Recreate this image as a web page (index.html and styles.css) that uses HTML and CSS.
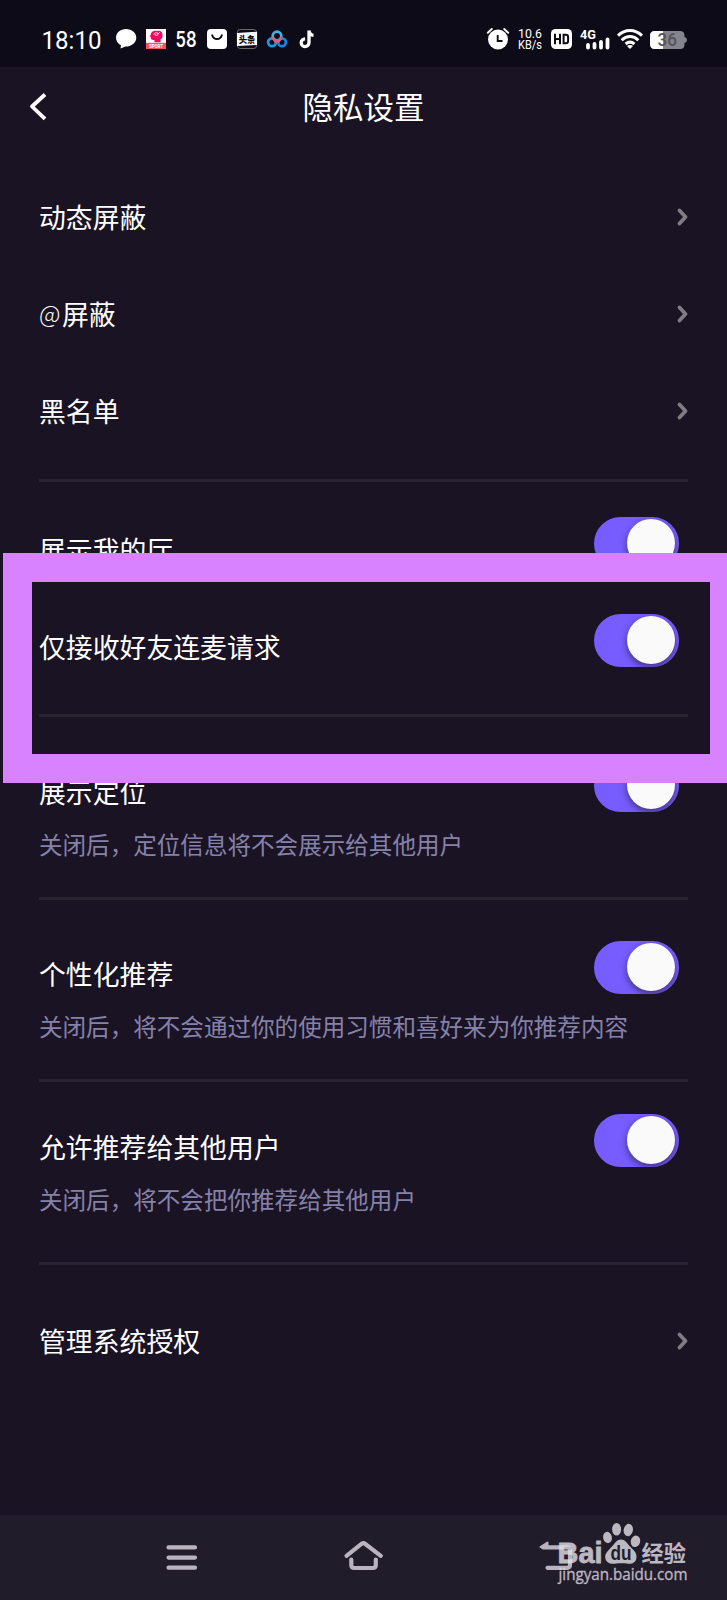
FILE: index.html
```html
<!DOCTYPE html>
<html lang="zh-CN">
<head>
<meta charset="utf-8">
<title>隐私设置</title>
<link rel="stylesheet" href="styles.css">
</head>
<body>
<div class="screen">
  <div class="status">
    <svg class="clock" width="64" height="28" viewBox="40 26 64 28"><text x="41.5" y="49.5" textLength="60" lengthAdjust="spacingAndGlyphs">18:10</text></svg>
    <div class="apps">
      <svg width="20" height="20" viewBox="0 0 20 20"><path d="M10 0C4.300 0 0 3.700 0 8.800c0 3.200 2 6 5 7.500L4.500 19.500 9.500 17.600C15.500 17.600 20.300 13.800 20.300 8.800 20.300 3.700 15.700 0 10 0Z" fill="#fff"/></svg>
      <svg width="20" height="20" viewBox="0 0 20 20"><path fill="#fff" d="M0 0h20v20H0z"/><path fill="#ed5556" d="M0 13.800h20V20H0z"/><path fill="#ee0a61" d="M5 4.500C6 1.500 9 1.300 11 2c3-1 6 1 5.500 4.500.3 3-1.500 3.500-2 4v2.800H8.500V11C5.500 11.300 4.500 10 5 8.500L4 7.500Z"/><path d="M8 5.500c0-2 4-2.500 4-.5S8.500 6.500 9 5M12 5l2-2" fill="none" stroke="#fff" stroke-width=".9"/><text class="tiny" x="3" y="18.700" textLength="14">SPORT</text></svg>
      <svg width="20" height="20" viewBox="0 0 20 20"><text class="fifty" x="-.5" y="18" textLength="21" lengthAdjust="spacingAndGlyphs">58</text></svg>
      <svg width="20" height="20" viewBox="0 0 20 20"><rect width="20" height="20" rx="4" fill="#fff"/><path d="M5.200 6.200c1.500 5 8.100 5 9.600 0" fill="none" stroke="#0d0b17" stroke-width="1.900" stroke-linecap="round"/></svg>
      <svg width="20" height="20" viewBox="0 0 20 20"><rect x=".3" y=".5" width="19.400" height="19" rx="3" fill="#0d0b17" stroke="#aaa" stroke-width=".6"/><path fill="#fff" d="M0 4 20 2.800V16L0 17Z"/><text class="news" x="1.700" y="13.600" textLength="16.600" lengthAdjust="spacingAndGlyphs">头条</text></svg>
      <svg width="20" height="20" viewBox="0 0 20 20" fill="none" stroke-width="2.700"><circle cx="10" cy="7" r="4.300" stroke="#3db1e8"/><circle cx="5" cy="13.300" r="3.900" stroke="#129fe4"/><circle cx="15" cy="13.300" r="3.900" stroke="#1686e2"/><path d="M5.700 7.500a4.300 4.300 0 0 0 8.600 0M7 10.500l2.300 3M13 10.500l-2.300 3" stroke="#e95a70"/></svg>
      <svg width="20" height="20" viewBox="0 0 20 20"><path d="M12 1.500v12.400a3.900 3.900 0 1 1-3.900-4.100M12 1.500c.4 3 1.800 4.700 4.500 4.900" fill="none" stroke="#fff" stroke-width="3.300"/></svg>
    </div>
    <div class="signals">
      <svg width="22" height="22" viewBox="0 0 22 22"><circle cx="11" cy="11.500" r="10" fill="#fff"/><path d="M.8 4.800 4.800 1M21.200 4.800 17.200 1" stroke="#fff" stroke-width="1.900" stroke-linecap="round"/><path d="M10.700 7v6h4.800" fill="none" stroke="#0d0b17" stroke-width="1.900"/></svg>
      <svg width="24" height="22" viewBox="0 0 24 22"><text class="rate" x="0" y="9.800" textLength="24" lengthAdjust="spacingAndGlyphs">10.6</text><text class="rate unit" x="0" y="20.700" textLength="24" lengthAdjust="spacingAndGlyphs">KB/s</text></svg>
      <svg width="21" height="22" viewBox="0 0 21 22"><rect y="1" width="21" height="20" rx="4.500" fill="#fff"/><path d="M4 5.800v10.400M9 5.800v10.400M4 11h5M12.600 6.800v8.400h2.200q2.300 0 2.300-2.300V9.100q0-2.300-2.300-2.300Z" fill="none" stroke="#0d0b17" stroke-width="2"/></svg>
      <svg width="30" height="22" viewBox="0 0 30 22"><text class="gen" x="0" y="10.800" textLength="16" lengthAdjust="spacingAndGlyphs">4G</text><path d="M8 17v2.500M14.500 16v3.500M21 14v5.500M27.500 11.500v8" stroke="#fff" stroke-width="3.800" stroke-linecap="round"/></svg>
      <svg width="26" height="22" viewBox="0 0 26 22"><g fill="none" stroke="#fff" stroke-width="3"><path d="M1 7.600c7-6.800 17-6.800 24 0M4.700 12.200c5-4.900 11.600-4.900 16.600 0M8.600 16c3-2.600 5.800-2.600 8.800 0"/></g><path d="M10 18c2-1.300 4-1.300 6 0l-3 3Z" fill="#fff"/></svg>
      <svg width="37" height="22" viewBox="0 0 37 22"><path d="M5 3h25q4.500 0 4.500 4.500v1.500q2.500.5 2.500 3t-2.500 3v1.500q0 4.500-4.500 4.500H5q-5 0-5-5V8q0-5 5-5Z" fill="#85838b"/><path d="M5 3h8v18H5q-5 0-5-5V8q0-5 5-5Z" fill="#fff"/><text class="level" x="7.500" y="18" textLength="19.500" lengthAdjust="spacingAndGlyphs">36</text></svg>
    </div>
  </div>

  <header class="header">
    <svg class="back" width="18" height="30" viewBox="0 0 18 30"><path d="M15 2.500 2 14.500l13 12.400" fill="none" stroke="#fff" stroke-width="3.800" stroke-linejoin="round"/></svg>
    <h1>隐私设置</h1>
  </header>

  <main>
    <section class="links">
      <div class="row"><span>动态屏蔽</span><svg class="chev" viewBox="0 0 11 18"><path d="M2.500 2.500 8.500 9l-6 6.500"/></svg></div>
      <div class="row"><span><span class="at">@</span>屏蔽</span><svg class="chev" viewBox="0 0 11 18"><path d="M2.500 2.500 8.500 9l-6 6.500"/></svg></div>
      <div class="row"><span>黑名单</span><svg class="chev" viewBox="0 0 11 18"><path d="M2.500 2.500 8.500 9l-6 6.500"/></svg></div>
    </section>
    <section class="friends">
      <div class="row option"><span>展示我的厅</span><i class="toggle"></i></div>
      <div class="row option"><span>仅接收好友连麦请求</span><i class="toggle"></i></div>
      <div class="highlight"></div>
    </section>
    <section class="location">
      <div class="row option"><span>展示定位</span><i class="toggle"></i></div>
      <p>关闭后，定位信息将不会展示给其他用户</p>
    </section>
    <section class="personal">
      <div class="row option"><span>个性化推荐</span><i class="toggle"></i></div>
      <p>关闭后，将不会通过你的使用习惯和喜好来为你推荐内容</p>
    </section>
    <section class="suggest">
      <div class="row option"><span>允许推荐给其他用户</span><i class="toggle"></i></div>
      <p>关闭后，将不会把你推荐给其他用户</p>
    </section>
    <section class="system">
      <div class="row"><span>管理系统授权</span><svg class="chev" viewBox="0 0 11 18"><path d="M2.500 2.500 8.500 9l-6 6.500"/></svg></div>
    </section>
  </main>

  <nav class="nav">
    <svg width="40" height="40" viewBox="162 1537 40 40"><path d="M168.500 1547.400h26.500M168.500 1557.600h26.500M168.500 1567.700h26.500"/></svg>
    <svg width="40" height="40" viewBox="343 1537 40 40"><path d="M346.500 1555.800 361.800 1543.700q1.600-1.200 3.200 0L380.800 1555.800M351.300 1559.500v5.500q0 3 3 3h18.500q3 0 3-3v-5.500"/></svg>
    <svg width="40" height="40" viewBox="535 1537 40 40"><path d="M543 1547.300h24q3 0 3 3v14.500q0 3-3 3h-19.500"/><path d="M540.500 1547 547.500 1542.500v5Z" fill="#b8b3bf" stroke-width="2"/></svg>
    <div class="watermark">
      <svg width="140" height="66" viewBox="552 1518 140 66">
        <text class="bai" x="557.500" y="1562.500" textLength="45" lengthAdjust="spacingAndGlyphs">Bai</text>
        <ellipse cx="607.500" cy="1537.500" rx="4.400" ry="5.700" transform="rotate(-12 607.500 1537.500)"/><ellipse cx="616.600" cy="1529.300" rx="4.500" ry="6.300"/><ellipse cx="628.300" cy="1530" rx="4.600" ry="6.200" transform="rotate(12 628.300 1530)"/><ellipse cx="635.500" cy="1541.300" rx="4.700" ry="5.800" transform="rotate(15 635.500 1541.300)"/>
        <path d="M621 1539.500c4 0 6 3.500 9 7 4 4 7 6.500 6.500 11-.5 5-4 6.500-8 6.200-5-.5-9-.5-14 0-5 .3-9-1.500-9.300-6.500-.2-4 3.300-7 6.800-10.700 3-3.500 5-7 9-7Z"/>
        <text class="du" x="610.500" y="1560" textLength="21" lengthAdjust="spacingAndGlyphs">du</text>
        <text class="jing" x="641.500" y="1561" textLength="44.500" lengthAdjust="spacingAndGlyphs">经验</text>
        <text class="url" x="558.500" y="1580" textLength="129" lengthAdjust="spacingAndGlyphs">jingyan.baidu.com</text>
      </svg>
    </div>
  </nav>
</div>
</body>
</html>
```
FILE: styles.css
```css
* { box-sizing: border-box; }

body {
  margin: 0;
  background: #1a1323;
  color: #fff;
  font-family: "Noto Sans CJK SC", sans-serif;
}

.screen {
  width: 727px;
  height: 1600px;
  display: flex;
  flex-direction: column;
  overflow: hidden;
  position: relative;
}

svg { display: block; flex: none; overflow: visible; }

/* Status bar */
.status {
  height: 67px;
  flex: none;
  padding: 11px 40px 0;
  display: flex;
  align-items: center;
  background: #0d0b17;
  font-family: Roboto, sans-serif;
}
.status text { fill: #fff; }
.clock text { font-size: 26.500px; }
.apps { display: flex; gap: 10.200px; margin-left: 12px; }
.signals { display: flex; gap: 8px; margin-left: auto; }
.signals svg:nth-child(2) { margin-left: 1px; }
.signals svg:nth-child(3) { margin-left: 1px; }
.signals svg:nth-child(5) { margin-left: -1px; }
.signals svg:nth-child(6) { margin-left: -1px; }
.status .tiny { font-size: 4.500px; font-weight: 700; }
.status .fifty { font: 600 21.500px Inter, sans-serif; }
.status .news { font: 900 9px "Noto Sans CJK SC", sans-serif; fill: #0d0b17; }
.status .rate { font-size: 12.500px; font-weight: 400; }
.status .unit { font-size: 12px; }
.status .gen { font-size: 13.500px; font-weight: 700; }
.status .level { font-size: 18px; font-weight: 500; fill: #55535b; }

/* Title bar */
.header {
  height: 102px;
  flex: none;
  padding: 0 30px 22px;
  display: grid;
  grid-template-columns: 60px 1fr 60px;
  align-items: center;
}
.header h1 {
  margin: 0;
  padding-bottom: 2px;
  font-size: 30.500px;
  font-weight: 400;
  line-height: 44px;
  text-align: center;
}

/* Settings */
main { flex: 1; padding: 0 39px; }

section { border-bottom: 3px solid #29232f; }

.row {
  height: 97px;
  display: flex;
  align-items: center;
  justify-content: space-between;
  font-size: 26.850px;
  line-height: 40px;
}
.links .row { padding-bottom: 1px; }
.at {
  display: inline-block;
  width: 23px;
  font: 300 23.500px/30px "Noto Sans CJK SC", sans-serif;
  position: relative;
  top: -2px;
}

.chev { width: 11px; height: 18px; }
.chev path {
  fill: none;
  stroke: #807c83;
  stroke-width: 3.800;
  stroke-linecap: round;
  stroke-linejoin: round;
}

.option { padding-right: 9px; }
.option span { padding-top: 12px; }

.toggle {
  width: 85px;
  height: 53px;
  padding: 2px 4px 3px;
  display: flex;
  justify-content: flex-end;
  border-radius: 27px;
  overflow: hidden;
  background: #775dff;
}
.toggle::before {
  content: "";
  width: 48px;
  height: 48px;
  border-radius: 50%;
  background: #fafafa;
  box-shadow: 0 3px 7px rgba(25, 20, 35, .6);
}

p {
  margin: 0;
  color: #8582aa;
  font-size: 23.570px;
  line-height: 34px;
  white-space: nowrap;
}

.links { height: 313px; }
.friends { height: 235px; padding-top: 13px; position: relative; }
.location { height: 183px; padding-top: 20px; }
.personal { height: 182px; padding-top: 19px; }
.suggest { height: 183px; padding-top: 10px; }
.system { padding-top: 27px; border: 0; }

.location p, .personal p, .suggest p { margin-top: -7px; }

.highlight {
  position: absolute;
  left: -36px;
  top: 71px;
  width: 736px;
  height: 230px;
  border: 29px solid #d882ff;
}

/* System navigation */
.nav {
  height: 85px;
  flex: none;
  padding: 0 152px 1px 162px;
  display: flex;
  align-items: center;
  gap: 141px;
  background: #201c29;
  position: relative;
}
.nav > svg { fill: none; stroke: #b8b3bf; stroke-width: 4.200; stroke-linecap: round; stroke-linejoin: round; }
.nav > svg:nth-child(3) { margin-left: 11px; }

.watermark {
  position: absolute;
  left: 552px;
  top: 3px;
  fill: #e2dfe6;
  opacity: .8;
}
.bai { font: 700 30px "Liberation Sans", sans-serif; stroke: #e2dfe6; stroke-width: .8; }
.du { font: 700 20px "Liberation Sans", sans-serif; fill: #201c29; }
.jing { font: 700 22px "Noto Sans CJK SC", sans-serif; }
.url { font: 400 16px "Open Sans", sans-serif; stroke: #e2dfe6; stroke-width: .3; }
```
